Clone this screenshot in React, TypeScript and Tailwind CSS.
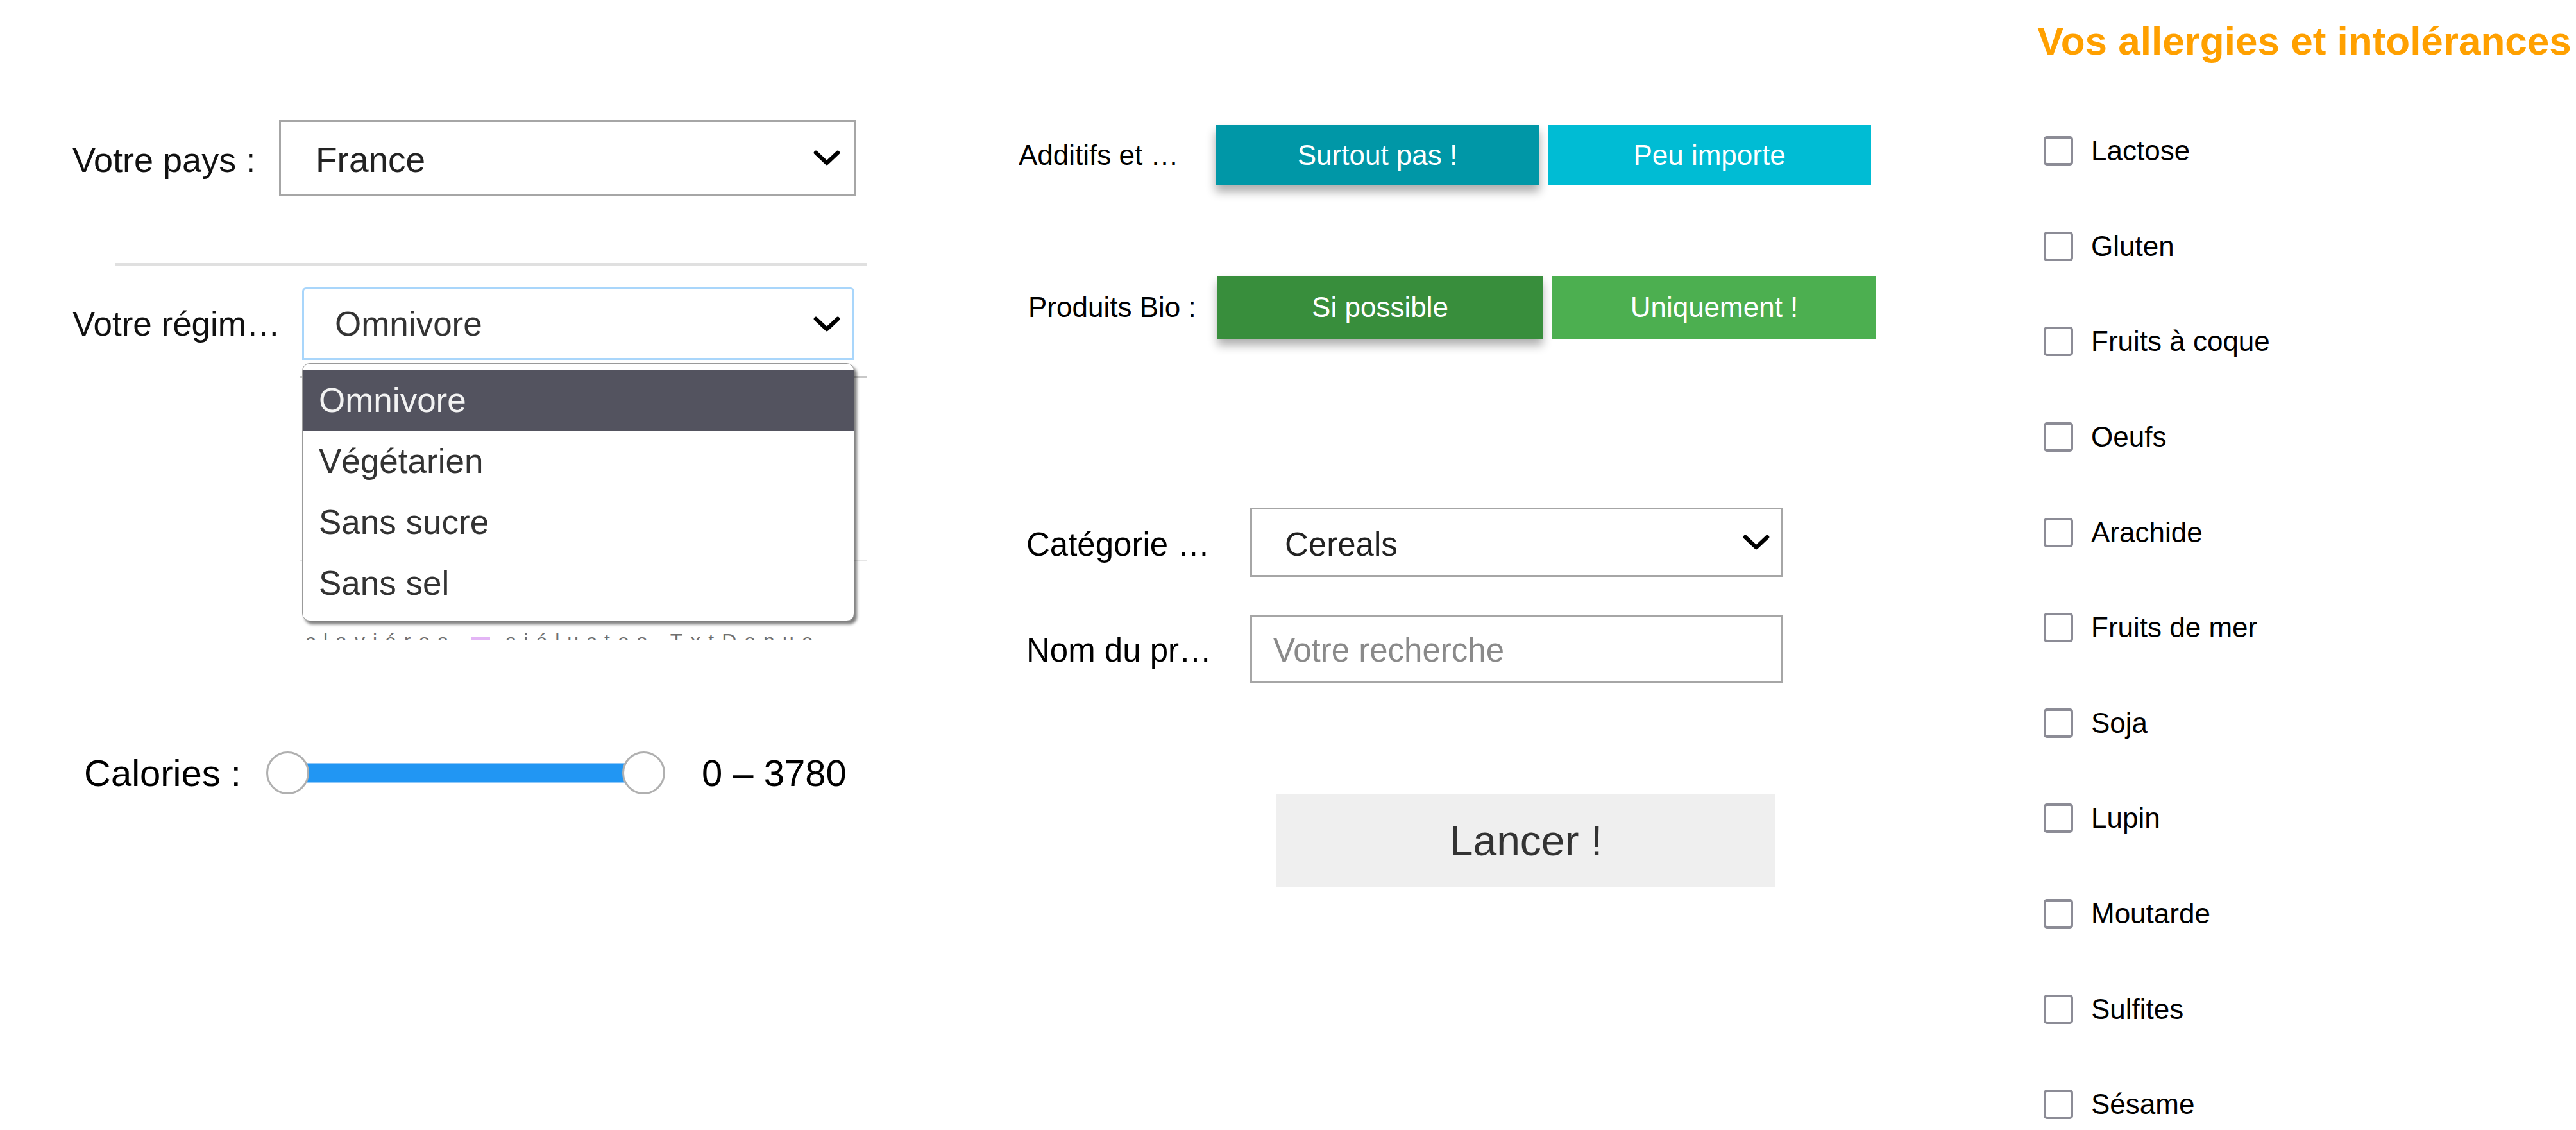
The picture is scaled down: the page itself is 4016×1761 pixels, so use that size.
import React from "react";

function Chevron() {
  return (
    <svg width="44" height="26" viewBox="0 0 44 26" className="shrink-0">
      <polyline points="5,5 22,21 39,5" fill="none" stroke="#000" strokeWidth="6.5" strokeLinecap="round" strokeLinejoin="round" />
    </svg>
  );
}

const allergies = [
  "Lactose",
  "Gluten",
  "Fruits à coque",
  "Oeufs",
  "Arachide",
  "Fruits de mer",
  "Soja",
  "Lupin",
  "Moutarde",
  "Sulfites",
  "Sésame",
];

export default function App() {
  return (
    <div className="w-[4016px] h-[1761px] overflow-hidden bg-white flex text-black" style={{ fontFamily: '"Liberation Sans", Arial, sans-serif' }}>
      {/* LEFT COLUMN */}
      <div className="w-[1588px] shrink-0 flex flex-col pt-[187px]">
        <div className="flex items-center pl-[113px]">
          <div className="w-[322px] shrink-0 pt-[7px] text-[54px] text-[#111] whitespace-nowrap">Votre pays :</div>
          <div className="w-[899px] h-[118px] border-[3px] border-[#a6a6a6] flex items-center justify-between pl-[54px] pr-[20px]">
            <span className="pt-[7px] text-[55px] text-[#222]">France</span>
            <Chevron />
          </div>
        </div>

        <div className="mt-[105px] ml-[179px] w-[1173px] h-[4px] bg-[#e0e0e0]" />

        <div className="mt-[34px] flex items-center pl-[113px]">
          <div className="w-[358px] shrink-0 text-[53px] text-[#111] whitespace-nowrap">Votre régim…</div>
          <div className="relative w-[861px] h-[113px] border-[3px] border-[#a9d6fb] rounded-t-[6px] flex items-center justify-between pl-[48px] pr-[18px]">
            <span className="text-[53px] text-[#333]">Omnivore</span>
            <Chevron />
            <div className="absolute z-10 left-[-3px] top-[115px] w-[861px] h-[402px] bg-white border border-[#9a9a9a] rounded-[12px] shadow-[4px_5px_4px_rgba(0,0,0,0.5)] pt-[9px] pb-[11px] flex flex-col overflow-hidden">
              <div className="h-[95px] bg-[#53535f] text-[#f2f2f2] text-[53px] flex items-center pl-[25px]">Omnivore</div>
              <div className="h-[95px] text-[#333] text-[53px] flex items-center pl-[25px]">Végétarien</div>
              <div className="h-[95px] text-[#333] text-[53px] flex items-center pl-[25px]">Sans sucre</div>
              <div className="h-[95px] text-[#333] text-[53px] flex items-center pl-[25px]">Sans sel</div>
            </div>
          </div>
        </div>

        {/* content hidden behind the open list */}
        <div className="mt-[5px] ml-[468px] w-[884px] h-[432px] overflow-hidden flex flex-col">
          <div className="mt-[20px] h-[3px] bg-[#c8c8c8]" />
          <div className="mt-[283px] h-[2px] bg-[#e6e6e6]" />
          <div className="mt-[92px] h-[32px] overflow-hidden flex items-start pl-[8px]">
            <div className="mt-[17px] flex items-center gap-[24px] text-[32px] leading-[32px] tracking-[12px] text-[#6f6f6f] whitespace-nowrap">
              <span>claviéres</span>
              <span className="inline-block w-[30px] h-[14px] bg-[#e3b5f5]" />
              <span>siéluctes</span>
              <span>TxtDenue</span>
            </div>
          </div>
        </div>

        <div className="mt-[173px] flex items-center pl-[131px] h-[67px]">
          <div className="w-[284px] shrink-0 text-[58px] whitespace-nowrap">Calories :</div>
          <div className="relative w-[622px] h-[67px] shrink-0">
            <div className="absolute left-[33px] right-[33px] top-[18px] h-[31px] bg-[#2196f3] border-y border-[#90c8f8]" />
            <div className="absolute left-0 top-0 w-[67px] h-[67px] rounded-full bg-white border-[3px] border-[#b0b0b0]" />
            <div className="absolute right-0 top-0 w-[67px] h-[67px] rounded-full bg-white border-[3px] border-[#b0b0b0]" />
          </div>
          <div className="ml-[57px] text-[58px] whitespace-nowrap">0 – 3780</div>
        </div>
      </div>

      {/* MIDDLE COLUMN */}
      <div className="w-[1588px] shrink-0 flex flex-col pt-[195px]">
        <div className="flex items-center h-[94px]">
          <div className="w-[307px] shrink-0">
            <div className="w-[256px] truncate text-[44px]">Additifs et leurs effets</div>
          </div>
          <div className="w-[505px] h-[94px] bg-[#0097a7] text-white text-[44px] flex items-center justify-center shadow-[0_10px_14px_rgba(0,0,0,0.32)]">Surtout pas !</div>
          <div className="ml-[13px] w-[504px] h-[94px] bg-[#00bcd4] text-white text-[44px] flex items-center justify-center">Peu importe</div>
        </div>

        <div className="mt-[141px] flex items-center h-[98px]">
          <div className="w-[310px] shrink-0 pl-[15px] text-[44px] whitespace-nowrap">Produits Bio :</div>
          <div className="w-[507px] h-[98px] bg-[#388e3c] text-white text-[44px] flex items-center justify-center shadow-[0_10px_14px_rgba(0,0,0,0.32)]">Si possible</div>
          <div className="ml-[15px] w-[505px] h-[98px] bg-[#4caf50] text-white text-[44px] flex items-center justify-center">Uniquement !</div>
        </div>

        <div className="mt-[263px] flex items-center h-[108px]">
          <div className="w-[361px] shrink-0 pl-[12px] pt-[8px]">
            <div className="w-[292px] truncate text-[51px]">Catégorie de produit</div>
          </div>
          <div className="w-[830px] h-[108px] border-[3px] border-[#a6a6a6] flex items-center justify-between pl-[51px] pr-[16px]">
            <span className="pt-[8px] text-[51px] text-[#222]">Cereals</span>
            <Chevron />
          </div>
        </div>

        <div className="mt-[59px] flex items-center h-[107px]">
          <div className="w-[361px] shrink-0 pl-[12px] pt-[5px]">
            <div className="w-[292px] truncate text-[51px]">Nom du produit</div>
          </div>
          <div className="w-[830px] h-[107px] border-[3px] border-[#a6a6a6] flex items-center pl-[33px]">
            <span className="pt-[5px] text-[51px] text-[#8a8a8a]">Votre recherche</span>
          </div>
        </div>

        <div className="mt-[172px] ml-[402px] w-[778px] h-[146px] bg-[#efefef] text-[66px] text-[#333] flex items-center justify-center">Lancer !</div>
      </div>

      {/* RIGHT COLUMN */}
      <div className="flex-1 flex flex-col pt-[28px]">
        <div className="text-[62px] leading-[72px] font-bold text-[#ffa000] whitespace-nowrap">Vos allergies et intolérances</div>
        <div className="mt-[61px] flex flex-col">
          {allergies.map((a) => (
            <div key={a} className="h-[148.6px] shrink-0 flex items-center">
              <div className="ml-[10px] w-[46px] h-[46px] border-[4px] border-[#8c8c96] rounded-[5px] bg-white" />
              <div className="ml-[28px] text-[44px] whitespace-nowrap">{a}</div>
            </div>
          ))}
        </div>
      </div>
    </div>
  );
}
